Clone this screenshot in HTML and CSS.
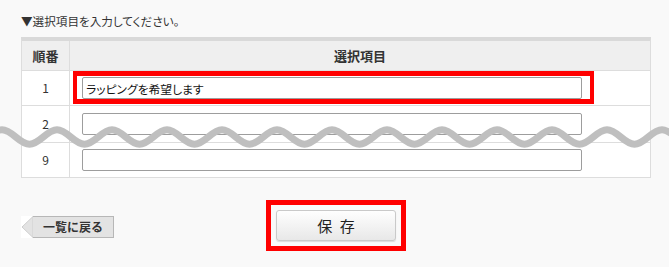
FILE: index.html
```html
<!DOCTYPE html>
<html lang="ja">
<head>
<meta charset="utf-8">
<title>選択項目</title>
<link rel="stylesheet" href="styles.css">
</head>
<body>
<div class="page">
  <p class="lead">▼選択項目を入力してください。</p>
  <table class="items">
    <thead>
      <tr><th class="num">順番</th><th class="name">選択項目</th></tr>
    </thead>
    <tbody>
      <tr class="row row-first">
        <td class="num">1</td>
        <td class="cell"><span class="field-wrap"><input class="field" type="text" value="ラッピングを希望します"><span class="mark mark-field"></span></span></td>
      </tr>
      <tr class="row row-mid">
        <td class="num">2</td>
        <td class="cell"><input class="field" type="text"></td>
      </tr>
      <tr class="row row-last">
        <td class="num">9</td>
        <td class="cell"><input class="field" type="text"></td>
      </tr>
    </tbody>
  </table>
  <div class="footer">
    <a class="back" href="#">
      <svg class="back-arrow" width="12" height="22" viewBox="0 0 12 22"><rect x="0" y="0" width="12" height="22" fill="#ffffff"/><polygon points="1,11 12,0.5 12,21.5" fill="#e3e3e3" stroke="#cfcfcf" stroke-width="1"/></svg><span class="back-label">一覧に戻る</span>
    </a>
    <div class="save-wrap">
      <button class="save" type="button">保 存</button>
      <span class="mark mark-save"></span>
    </div>
  </div>
</div>
<svg class="wave" width="669" height="30" viewBox="0 0 669 30">
  <path d="M -11.75 15 c 11.55 -9.67 15.95 -9.67 27.5 0 s 15.95 9.67 27.5 0 s 15.95 -9.67 27.5 0 s 15.95 9.67 27.5 0 s 15.95 -9.67 27.5 0 s 15.95 9.67 27.5 0 s 15.95 -9.67 27.5 0 s 15.95 9.67 27.5 0 s 15.95 -9.67 27.5 0 s 15.95 9.67 27.5 0 s 15.95 -9.67 27.5 0 s 15.95 9.67 27.5 0 s 15.95 -9.67 27.5 0 s 15.95 9.67 27.5 0 s 15.95 -9.67 27.5 0 s 15.95 9.67 27.5 0 s 15.95 -9.67 27.5 0 s 15.95 9.67 27.5 0 s 15.95 -9.67 27.5 0 s 15.95 9.67 27.5 0 s 15.95 -9.67 27.5 0 s 15.95 9.67 27.5 0 s 15.95 -9.67 27.5 0 s 15.95 9.67 27.5 0 s 15.95 -9.67 27.5 0 s 15.95 9.67 27.5 0" fill="none" stroke="#bfbfbf" stroke-width="7"/>
</svg>
</body>
</html>
```

FILE: styles.css
```css
html, body {
  margin: 0;
  padding: 0;
}
body {
  background: #f9f9f9;
  font-family: "Noto Sans CJK JP", "Liberation Sans", sans-serif;
  color: #333;
  position: relative;
  width: 669px;
  height: 267px;
  overflow: hidden;
}
.page {
  padding: 13px 0 0 21px;
}
.lead {
  margin: 0;
  font-size: 11.6px;
  line-height: 16px;
  height: 16px;
  font-feature-settings: "palt";
  color: #333;
}
.items {
  margin-top: 8px;
  width: 630px;
  border-collapse: separate;
  border-spacing: 0;
  background: #fff;
  border-top: 4px solid #d9d9d9;
  border-left: 1px solid #dddddd;
  border-right: 1px solid #dddddd;
  table-layout: fixed;
}
.items th {
  height: 29px;
  padding: 0;
  background: #efefef;
  border-bottom: 1px solid #dddddd;
  font-size: 13px;
  font-weight: bold;
  color: #333;
  text-align: center;
  vertical-align: middle;
  line-height: 29px;
}
.items th.num,
.items td.num {
  width: 47px;
  border-right: 1px solid #dddddd;
}
.items td {
  border-bottom: 1px solid #dddddd;
  vertical-align: top;
}
.items td.num {
  text-align: center;
  font-size: 12px;
  line-height: 14px;
  vertical-align: middle;
  padding: 0 0 1px 0;
}
.items td.cell {
  padding: 6px 0 6px 12px;
}
.row-mid td.cell {
  padding: 7px 0 7px 12px;
}
.field-wrap {
  position: relative;
  display: block;
  width: 500px;
}
.field {
  display: block;
  box-sizing: border-box;
  width: 500px;
  height: 22px;
  margin: 0;
  padding: 0 3px;
  border: 1px solid #9d9d9d;
  border-radius: 2px;
  background: #fff;
  font-family: "Noto Sans CJK JP", sans-serif;
  font-size: 11.8px;
  font-feature-settings: "palt";
  color: #111;
  outline: none;
}
.mark {
  position: absolute;
  box-sizing: border-box;
  border: 4px solid #ff0000;
  pointer-events: none;
}
.mark-field {
  left: -9px;
  top: -6px;
  right: -12px;
  bottom: -5px;
  border-width: 5px 4px 5px 4px;
}
.footer {
  width: 630px;
  margin-top: 32px;
  display: grid;
  grid-template-columns: 1fr auto 1fr;
  align-items: start;
}
.back {
  justify-self: start;
  margin-top: 6px;
  display: flex;
  text-decoration: none;
  height: 22px;
}
.back-arrow {
  display: block;
}
.back-label {
  box-sizing: border-box;
  height: 22px;
  line-height: 20px;
  padding: 0 10px;
  background: #e3e3e3;
  border: 1px solid #b7b7b7;
  border-left: none;
  font-size: 12px;
  font-weight: bold;
  color: #333;
}
.save-wrap {
  position: relative;
  grid-column: 2;
}
.save {
  display: block;
  box-sizing: border-box;
  width: 120px;
  height: 31px;
  margin: 0;
  padding: 0 0 0 2px;
  border: 1px solid #c9c9c9;
  border-radius: 3px;
  background: linear-gradient(#fefefe, #e8e8e8);
  box-shadow: 0 1px 1px rgba(0, 0, 0, 0.12);
  font-family: "Noto Sans CJK JP", sans-serif;
  font-size: 15px;
  letter-spacing: 2px;
  color: #222;
}
.mark-save {
  left: -10px;
  top: -10px;
  right: -10px;
  bottom: -10px;
  border-width: 5px;
}
.wave {
  position: absolute;
  left: 0;
  top: 122px;
}
```
